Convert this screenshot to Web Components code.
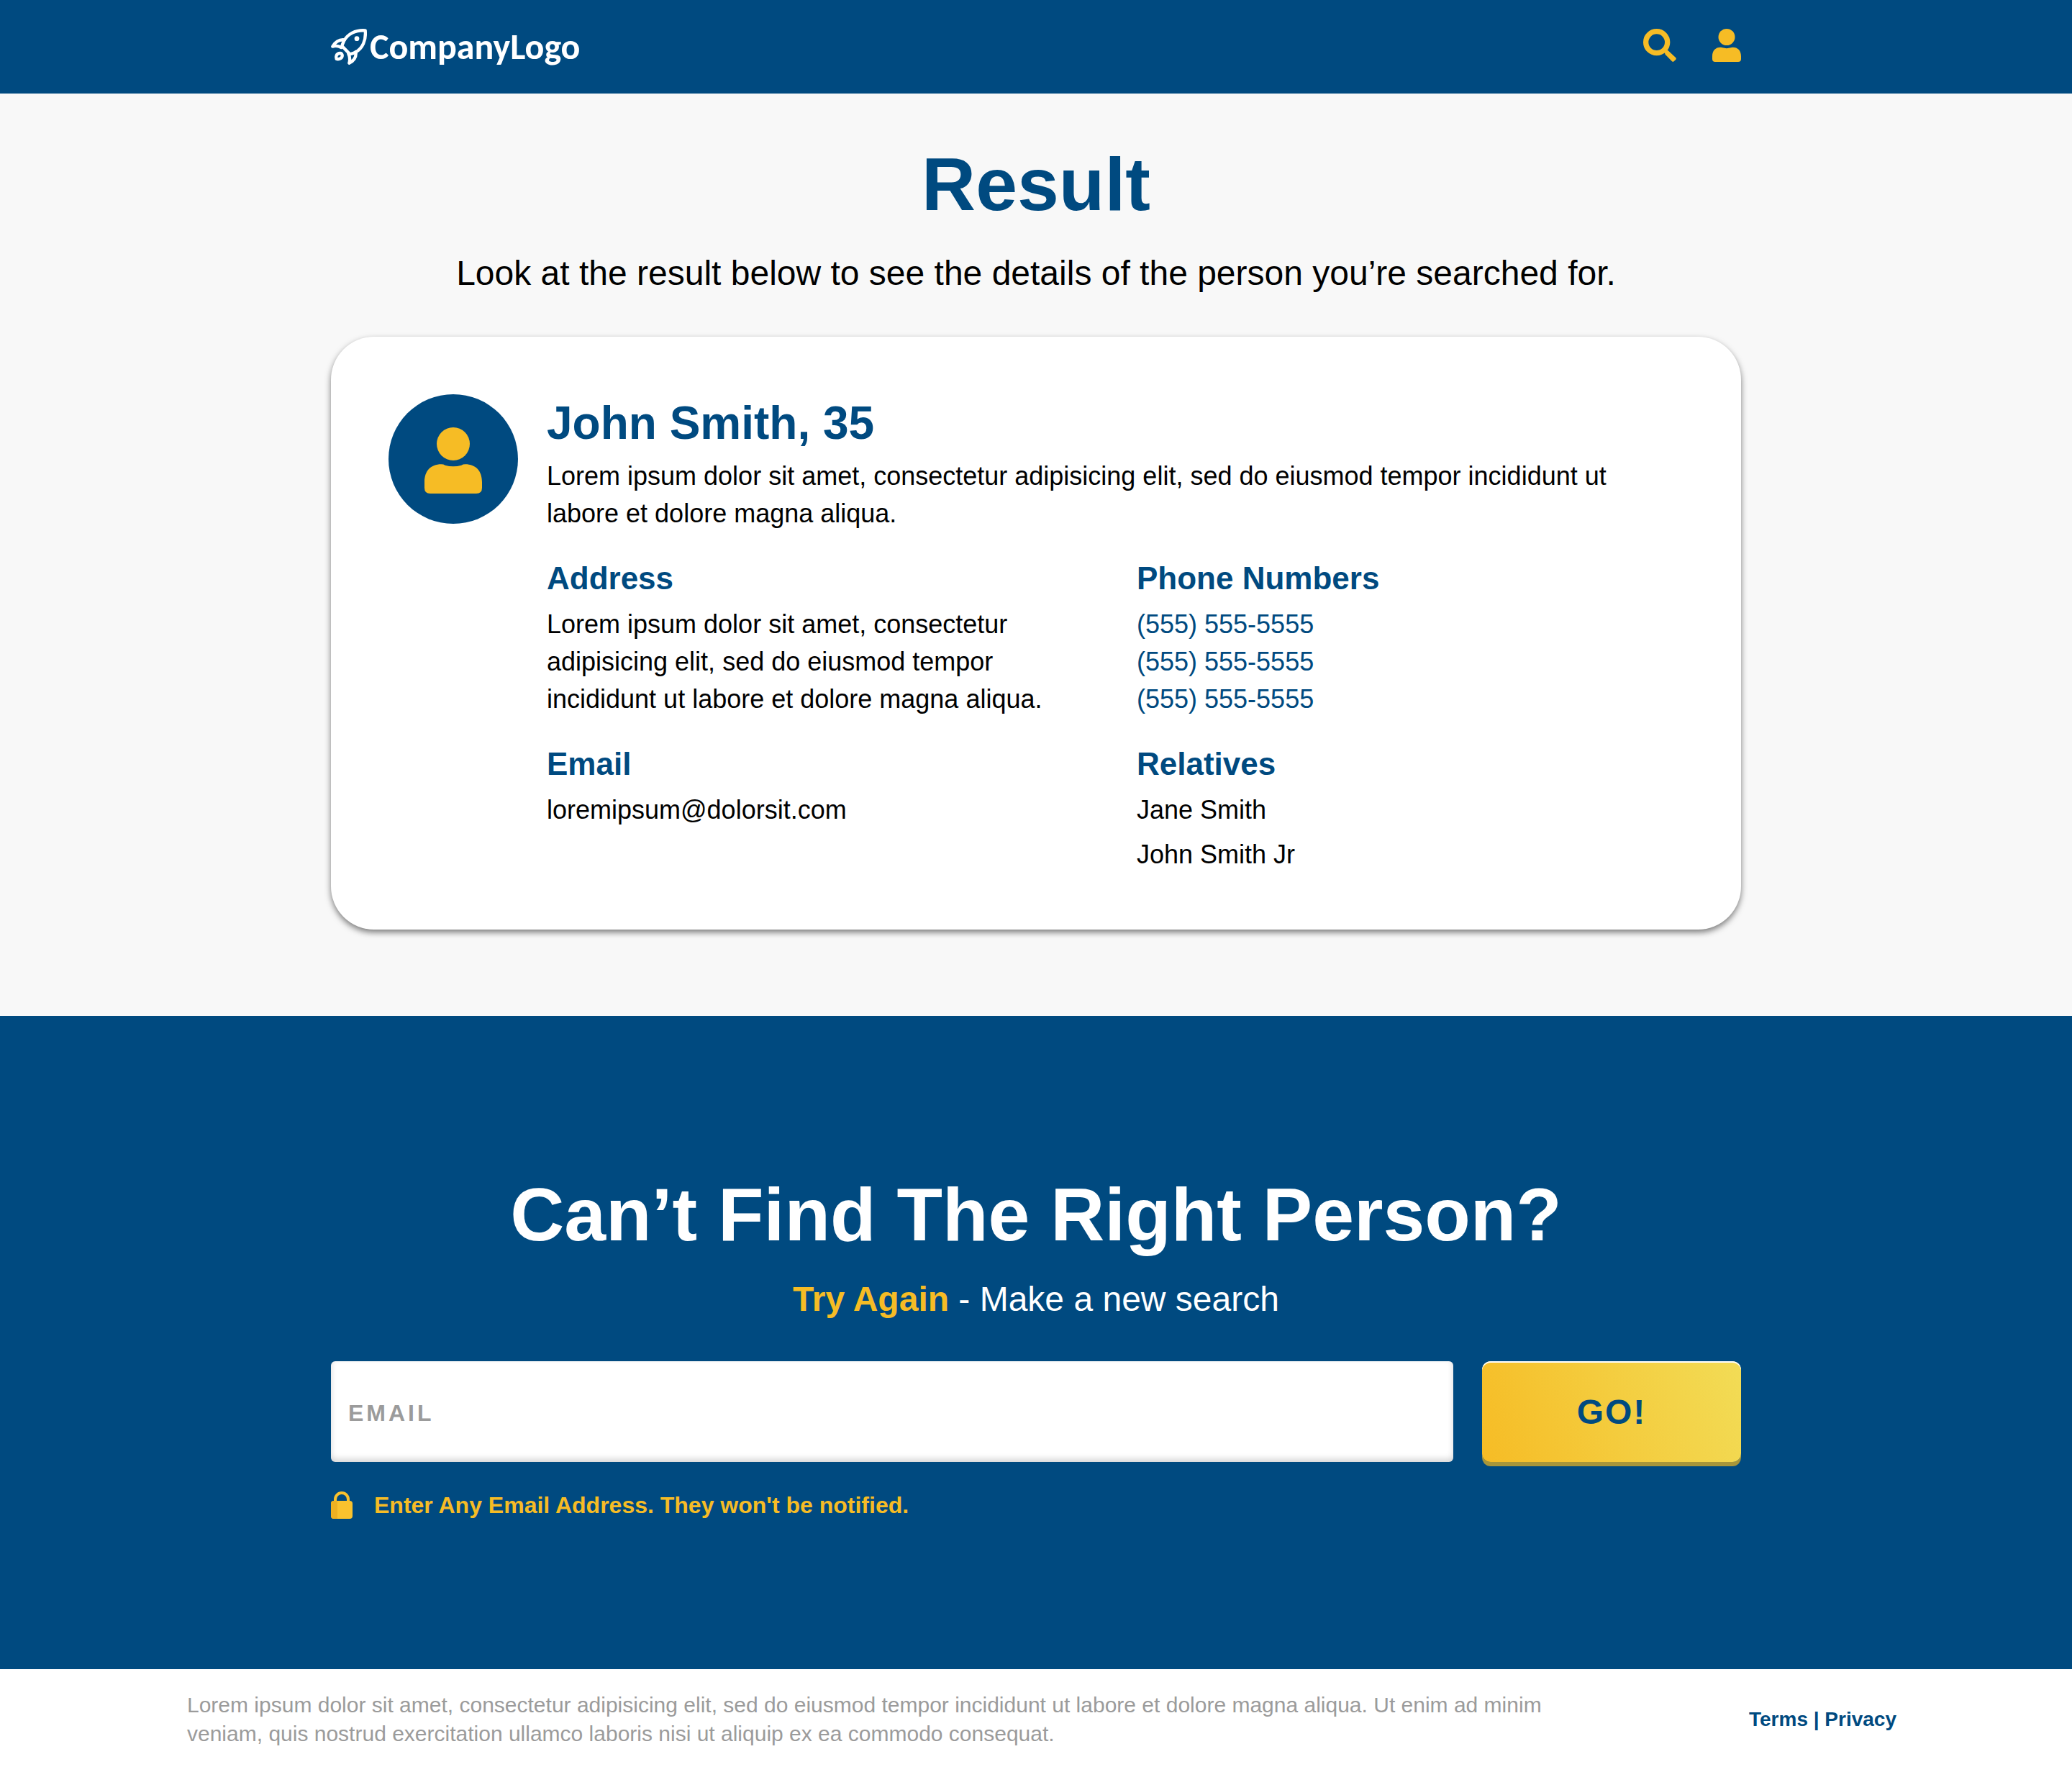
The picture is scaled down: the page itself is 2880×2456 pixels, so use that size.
<!DOCTYPE html>
<html lang="en">
<head>
<meta charset="utf-8">
<meta name="viewport" content="width=device-width, initial-scale=1">
<title>Result</title>
<style>
:root{--blue:#004a80;--yellow:#f6bc25;--wide:1960px}
body{margin:0;background:#fff;color:#000;font-family:"Liberation Sans",Arial,sans-serif;font-size:36px;line-height:52px}
</style>
</head>
<body>
<result-page></result-page>

<template id="t-page">
<style>:host{display:block}</style>
<site-header></site-header>
<main>
<result-section></result-section>
<search-again></search-again>
</main>
<site-footer></site-footer>
</template>

<template id="t-header">
<style>
:host{display:block;background:var(--blue)}
header{box-sizing:border-box;max-width:var(--wide);min-height:130px;margin:0 auto;display:flex;align-items:center;justify-content:space-between}
a{display:flex;align-items:center;text-decoration:none}
.logo{gap:4px;color:#fff;font:bold 50px/50px Carlito,Lato,sans-serif}
nav{display:flex;align-items:center;gap:50px;padding-bottom:4px}
button{display:flex;padding:0;border:0;background:none;cursor:pointer;color:var(--yellow)}
svg{display:block}
user-icon{width:40px;height:46px}
</style>
<header>
<a class="logo" href="#" aria-label="CompanyLogo">
<svg width="50" height="50" viewBox="0 0 150 150" fill="none" stroke="#fff" stroke-width="13" stroke-linejoin="round" stroke-linecap="round" aria-hidden="true">
<path d="M143 7C102 4 70 22 54 51C50 60 47 67 46 72L79 106C87 104 95 102 102 98C132 82 147 48 143 7Z"/>
<circle cx="108" cy="41" r="10" fill="#fff" stroke="none"/>
<path d="M56 46C36 44 18 55 7 74C18 70 32 72 43 78"/>
<path d="M104 96C106 118 96 134 76 143C80 130 79 117 73 104"/>
<path d="M36 102C23 104 19 116 23 126C35 129 49 122 47 109C45 103 41 101 36 102Z"/>
</svg>
<span>CompanyLogo</span></a>
<nav>
<button type="button" aria-label="Search"><svg width="46" height="46" viewBox="0 0 138 138" aria-hidden="true"><circle cx="56" cy="56" r="45" fill="none" stroke="currentColor" stroke-width="22"/><path fill="currentColor" d="M90 101V96L96 90H103L136 121Q139 125 136 128L128 136Q124 139 120 136L92 107Z"/></svg></button>
<button type="button" aria-label="Account"><user-icon></user-icon></button>
</nav>
</header>
</template>

<template id="t-user">
<style>:host{display:block;color:var(--yellow)}svg{display:block;width:100%;height:100%}</style>
<svg viewBox="0 0 120 138" fill="currentColor" aria-hidden="true"><circle cx="60" cy="34.500" r="34.500"/><path d="M0 114C0 91 13 77 35 77Q40 77 43 79Q60 84 77 79Q80 77 85 77C107 77 120 91 120 114V126Q120 138 108 138H12Q0 138 0 126Z"/></svg>
</template>

<template id="t-result">
<style>
:host{display:block;background:#f8f8f8}
section{max-width:var(--wide);margin:0 auto;padding:60px 0 120px}
h1{margin:0 0 24px;color:var(--blue);font-size:104px;line-height:132px;text-align:center}
.lead{margin:0 0 54px;font-size:48px;line-height:68px;text-align:center}
a{color:var(--blue);text-decoration:none;display:block}
ul{list-style:none;margin:0;padding:0;display:grid;gap:10px}
</style>
<section>
<h1>Result</h1>
<p class="lead">Look at the result below to see the details of the person you’re searched for.</p>
<person-card>
<span slot="name">John Smith, 35</span>
<span slot="about">Lorem ipsum dolor sit amet, consectetur adipisicing elit, sed do eiusmod tempor incididunt ut labore et dolore magna aliqua.</span>
<info-block heading="Address">Lorem ipsum dolor sit amet, consectetur adipisicing elit, sed do eiusmod tempor incididunt ut labore et dolore magna aliqua.</info-block>
<info-block heading="Phone Numbers"><a href="tel:5555555555">(555) 555-5555</a><a href="tel:5555555555">(555) 555-5555</a><a href="tel:5555555555">(555) 555-5555</a></info-block>
<info-block heading="Email">loremipsum@dolorsit.com</info-block>
<info-block heading="Relatives"><ul><li>Jane Smith</li><li>John Smith Jr</li></ul></info-block>
</person-card>
</section>
</template>

<template id="t-card">
<style>
:host{display:block}
article{display:flex;gap:40px;padding:80px 80px 78px;border-radius:60px;background:#fff;box-shadow:0 4px 8px rgba(0,0,0,.5)}
.avatar{box-sizing:border-box;flex:none;width:180px;height:180px;padding-top:4px;border-radius:50%;background:var(--blue);display:flex;align-items:center;justify-content:center}
user-icon{width:80px;height:92px}
.body{flex:1;min-width:0}
h2{margin:0 0 8px;color:var(--blue);font-size:64px;line-height:80px}
p{margin:0 0 34px}
.grid{display:grid;grid-template-columns:1fr 1fr;gap:34px 60px}
</style>
<article>
<div class="avatar"><user-icon></user-icon></div>
<div class="body">
<h2><slot name="name"></slot></h2>
<p><slot name="about"></slot></p>
<div class="grid"><slot></slot></div>
</div>
</article>
</template>

<template id="t-info">
<style>
:host{display:block}
h3{margin:0 0 8px;color:var(--blue);font-size:44px;line-height:60px}
</style>
<h3></h3>
<div><slot></slot></div>
</template>

<template id="t-again">
<style>
:host{display:block;background:var(--blue);color:#fff}
section{max-width:var(--wide);margin:0 auto;padding:210px 0 208px}
h2{margin:0 0 18px;font-size:104px;line-height:132px;text-align:center}
p{margin:0 0 52px;font-size:48px;line-height:68px;text-align:center}
strong{color:var(--yellow)}
form{display:flex;gap:40px}
label{flex:1;display:flex}
input{box-sizing:border-box;width:100%;height:140px;padding:4px 24px 0;border:0;border-radius:6px;background:#fff;box-shadow:inset 0 -4px 8px rgba(0,0,0,.17);color:#000;font:bold 32px "Liberation Sans",Arial,sans-serif;letter-spacing:4px}
input::placeholder{color:#9b9b9b;opacity:1}
button{flex:none;width:360px;height:140px;padding:0;border:0;border-radius:12px;background:linear-gradient(70deg,#f6bc25,#f2dc56);box-shadow:inset 0 2px 0 #fff,0 6px 0 #a8963a;color:var(--blue);font:bold 48px "Liberation Sans",Arial,sans-serif;letter-spacing:2px;cursor:pointer}
.note{display:flex;align-items:center;gap:30px;margin-top:40px;color:var(--yellow);font-weight:bold;font-size:32px;line-height:40px}
</style>
<section>
<h2>Can’t Find The Right Person?</h2>
<p><strong>Try Again</strong> - Make a new search</p>
<form>
<label><input type="email" placeholder="EMAIL" aria-label="Email"></label>
<button type="button">GO!</button>
</form>
<div class="note">
<svg width="30" height="38" viewBox="0 0 30 38" aria-hidden="true"><path d="M6 15V11A9 9 0 0 1 24 11V15" fill="none" stroke="#f9c22e" stroke-width="4"/><rect y="13" width="30" height="25" rx="4" fill="#f9c22e"/><path d="M9 13H4Q0 13 0 17V34Q0 38 4 38H9Z" fill="#eeb122"/></svg>
<span>Enter Any Email Address. They won't be notified.</span>
</div>
</section>
</template>

<template id="t-footer">
<style>
:host{display:block;background:#fff}
footer{box-sizing:border-box;max-width:2400px;margin:0 auto;padding:30px 4px 26px 20px;display:flex;align-items:center;justify-content:space-between;font-size:30px;line-height:40px}
p{margin:0;max-width:1940px;color:#9b9b9b}
nav{color:var(--blue);font-weight:bold;font-size:28px;white-space:nowrap}
a{color:inherit;text-decoration:none}
</style>
<footer>
<p>Lorem ipsum dolor sit amet, consectetur adipisicing elit, sed do eiusmod tempor incididunt ut labore et dolore magna aliqua. Ut enim ad minim veniam, quis nostrud exercitation ullamco laboris nisi ut aliquip ex ea commodo consequat.</p>
<nav><a href="#">Terms</a> | <a href="#">Privacy</a></nav>
</footer>
</template>

<script>
class BaseElement extends HTMLElement {
  constructor() {
    super();
    const template = document.getElementById(this.constructor.template);
    this.attachShadow({ mode: 'open' }).append(template.content.cloneNode(true));
  }
}
class UserIcon extends BaseElement { static template = 't-user'; }
class InfoBlock extends BaseElement {
  static template = 't-info';
  connectedCallback() {
    this.shadowRoot.querySelector('h3').textContent = this.getAttribute('heading');
  }
}
class PersonCard extends BaseElement { static template = 't-card'; }
class SiteHeader extends BaseElement { static template = 't-header'; }
class ResultSection extends BaseElement { static template = 't-result'; }
class SearchAgain extends BaseElement { static template = 't-again'; }
class SiteFooter extends BaseElement { static template = 't-footer'; }
class ResultPage extends BaseElement { static template = 't-page'; }

customElements.define('user-icon', UserIcon);
customElements.define('info-block', InfoBlock);
customElements.define('person-card', PersonCard);
customElements.define('site-header', SiteHeader);
customElements.define('result-section', ResultSection);
customElements.define('search-again', SearchAgain);
customElements.define('site-footer', SiteFooter);
customElements.define('result-page', ResultPage);
</script>
</body>
</html>
